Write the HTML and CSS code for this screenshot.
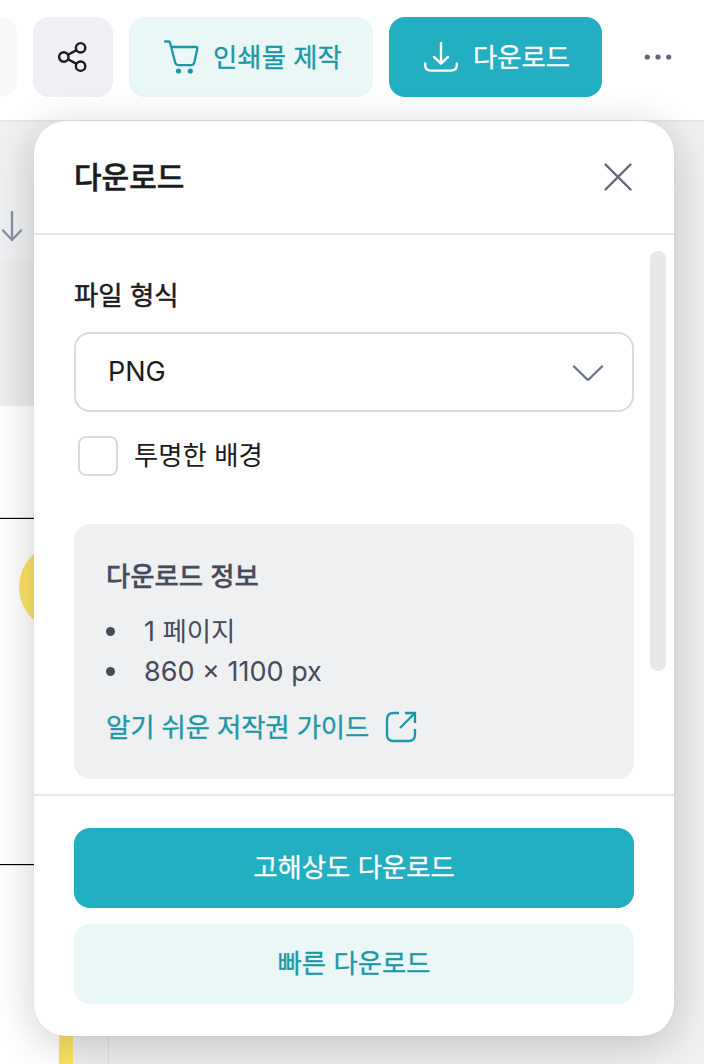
FILE: index.html
```
<!DOCTYPE html>
<html lang="ko">
<head>
  <meta charset="UTF-8" />
  <meta name="viewport" content="width=device-width, initial-scale=1.0"/>
  <title>다운로드</title>
  <link rel="stylesheet" href="styles.css">
</head>
<body>

  <header class="toolbar">
    <div class="tool-edge"></div>
    <button class="tool-btn share-btn" aria-label="공유">
      <svg width="32" height="32" viewBox="0 0 32 32" fill="none" stroke="#1b1b20" stroke-width="2.4">
        <circle cx="6.8" cy="16" r="4.7"/>
        <circle cx="23.6" cy="6.8" r="4.7"/>
        <circle cx="23.6" cy="25.2" r="4.7"/>
        <path d="M11 13.8l8.5-4.7M11 18.2l8.5 4.7"/>
      </svg>
    </button>
    <button class="tool-btn print-btn">
      <svg width="36" height="36" viewBox="0 0 36 36" fill="none" stroke="#1b97a6" stroke-width="2.3" stroke-linecap="round" stroke-linejoin="round">
        <path d="M2 2.500h3.400q1.200 0 1.600 1.300L8.200 8h24.900q1.500 0 1.200 1.500l-2.900 13.800q-.7 2.900-3.400 2.900H15.500q-2.700 0-3.300-2.600L8.200 8"/>
        <circle cx="15.500" cy="32" r="2.600" fill="#1b97a6" stroke="none"/>
        <circle cx="27.300" cy="32" r="2.600" fill="#1b97a6" stroke="none"/>
      </svg>
      <span>인쇄물 제작</span>
    </button>
    <button class="tool-btn download-btn">
      <svg width="36" height="36" viewBox="0 0 36 36" fill="none" stroke="#fff" stroke-width="2.4" stroke-linecap="round" stroke-linejoin="round">
        <path d="M18 4v20M11 18l7 6.500 7-6.500M2.200 24.500v1.500c0 3.600 2 5.600 5.600 5.600h20.400c3.600 0 5.600-2 5.600-5.600v-1.500"/>
      </svg>
      <span>다운로드</span>
    </button>
    <button class="more-btn" aria-label="더보기">
      <svg width="32" height="8" viewBox="0 0 32 8" fill="#62667b">
        <circle cx="5.300" cy="4" r="2.600"/>
        <circle cx="16" cy="4" r="2.600"/>
        <circle cx="26.700" cy="4" r="2.600"/>
      </svg>
    </button>
  </header>

  <main class="workspace">
    <div class="page-tools">
      <svg width="24" height="34" viewBox="0 0 24 34" fill="none" stroke="#8b92a3" stroke-width="2.4" stroke-linecap="round" stroke-linejoin="round">
        <path d="M12 3v28M3 21.500l9 9.500 9-9.500"/>
      </svg>
    </div>
    <div class="prev-page"></div>
    <div class="page">
      <div class="page-row">
        <div class="page-dot"></div>
      </div>
      <div class="page-foot">
        <div class="page-bar"></div>
        <div class="page-margin"></div>
      </div>
    </div>
  </main>

  <section class="dialog">
    <div class="dialog-header">
      <h1>다운로드</h1>
      <button class="close-btn" aria-label="닫기">
        <svg width="32" height="32" viewBox="0 0 32 32" fill="none" stroke="#62667b" stroke-width="2.4" stroke-linecap="round">
          <path d="M3.500 3.500l25 25M28.500 3.500l-25 25"/>
        </svg>
      </button>
    </div>

    <div class="dialog-body">
      <div class="dialog-content">
        <div class="field-label">파일 형식</div>
        <div class="select">
          <span class="latin">PNG</span>
          <svg width="32" height="18" viewBox="0 0 32 18" fill="none" stroke="#6b738d" stroke-width="2.4" stroke-linecap="round" stroke-linejoin="round">
            <path d="M2 2.500l12.800 12.500q1.200 1.100 2.400 0L30 2.500"/>
          </svg>
        </div>
        <div class="check-row">
          <span class="checkbox"></span>
          <span class="check-text">투명한 배경</span>
        </div>
        <div class="info">
          <h2>다운로드 정보</h2>
          <ul>
            <li><span class="latin">1</span><span class="unit"> 페이지</span></li>
            <li><span class="latin">860 × 1100 px</span></li>
          </ul>
          <a class="guide-link">
            <span>알기 쉬운 저작권 가이드</span>
            <svg width="32" height="32" viewBox="0 0 32 32" fill="none" stroke="#1b97a6" stroke-width="2.3">
              <path d="M14 2H8.500Q2 2 2 8.500v15Q2 30 8.500 30h15q6.500 0 6.500-6.500V18"/>
              <path d="M20 2h10v10M30 2L15 17"/>
            </svg>
          </a>
        </div>
      </div>
      <div class="scrollbar"></div>
    </div>

    <div class="dialog-footer">
      <button class="action primary">고해상도 다운로드</button>
      <button class="action secondary">빠른 다운로드</button>
    </div>
  </section>

</body>
</html>
```
FILE: styles.css
```
* {
  box-sizing: border-box;
}

body {
  margin: 0;
  height: 1064px;
  overflow: hidden;
  position: relative;
  display: flex;
  flex-direction: column;
  background-color: #eff0f2;
  color: #1b1b20;
  font-family: Inter, "Noto Sans CJK KR", sans-serif;
  font-size: 26.4px;
}

button {
  padding: 0;
  border: none;
  background: none;
  font: inherit;
  cursor: pointer;
}

svg {
  display: block;
  flex-shrink: 0;
}

.latin {
  font-size: 27px;
}

/* toolbar */
.toolbar {
  display: flex;
  gap: 16px;
  height: 122px;
  padding-top: 17px;
  background-color: #fff;
  border-bottom: 2px solid #e6e6e8;
  flex-shrink: 0;
}

.tool-edge {
  width: 17px;
  height: 80px;
  border-radius: 0 16px 16px 0;
  background-color: #f8f8f8;
}

.tool-btn {
  height: 80px;
  display: flex;
  align-items: center;
  justify-content: center;
  border-radius: 16px;
}

.tool-btn span {
  padding-bottom: 4px;
  -webkit-text-stroke: 0.3px currentColor;
}

.share-btn {
  width: 80px;
  background-color: #eff0f3;
}

.print-btn {
  width: 244px;
  gap: 14px;
  padding-left: 3px;
  background-color: #eaf7f7;
  color: #1b97a6;
}

.download-btn {
  width: 213px;
  gap: 14px;
  padding-left: 2px;
  background-color: #22afc1;
  color: #fff;
}

.more-btn {
  width: 80px;
  height: 80px;
  display: flex;
  align-items: center;
  justify-content: center;
}

/* canvas behind the dialog */
.workspace {
  flex: 1;
  display: flex;
  flex-direction: column;
}

.page-tools {
  height: 139px;
  padding-top: 87px;
}

.prev-page {
  width: 109px;
  height: 145px;
  background-color: #ededed;
}

.page {
  width: 109px;
  flex: 1;
  display: flex;
  flex-direction: column;
  padding-top: 112px;
  background-color: #fff;
  border-right: 1px solid #dfdfe2;
}

.page-row {
  height: 347px;
  padding: 24px 0 0 19px;
  border-top: 1px solid #000;
  border-bottom: 1px solid #000;
  box-shadow: 0 0 1px #000;
}

.page-dot {
  width: 88px;
  height: 88px;
  border-radius: 50%;
  background-color: #fce364;
}

.page-foot {
  flex: 1;
  display: flex;
  padding-left: 59px;
}

.page-bar {
  width: 14px;
  background-color: #fce364;
}

.page-margin {
  flex: 1;
  background-color: #f0f0f0;
}

/* dialog */
.dialog {
  position: absolute;
  top: 121px;
  left: 34px;
  width: 640px;
  height: 915px;
  display: flex;
  flex-direction: column;
  background-color: #fff;
  border-radius: 32px;
  box-shadow: 0 8px 44px rgba(0, 0, 0, 0.2), 0 0 2px rgba(0, 0, 0, 0.06);
}

.dialog-header {
  height: 114px;
  padding: 0 40px;
  display: flex;
  align-items: center;
  justify-content: space-between;
  border-bottom: 2px solid #e6e7e9;
  flex-shrink: 0;
}

.dialog-header h1 {
  margin: 0;
  padding-bottom: 5px;
  font-size: 30px;
  font-weight: 500;
  -webkit-text-stroke: 0.5px currentColor;
}

.dialog-body {
  flex: 1;
  display: flex;
  gap: 16px;
  padding: 16px 8px 15px 40px;
}

.dialog-header {
  height: 114px;
}

.dialog-content {
  width: 560px;
}

.field-label {
  height: 81px;
  padding-top: 24px;
  line-height: 40px;
  -webkit-text-stroke: 0.5px currentColor;
}

.select {
  height: 80px;
  padding: 0 28px 0 32px;
  display: flex;
  align-items: center;
  justify-content: space-between;
  border: 2px solid #dadbe0;
  border-radius: 16px;
}

.select .latin {
  padding-bottom: 2px;
}

.select svg {
  margin-top: 2px;
}

.check-row {
  display: flex;
  align-items: center;
  gap: 16px;
  margin: 24px 0 48px 4px;
  height: 40px;
}

.check-text {
  padding-bottom: 5px;
}

.checkbox {
  width: 40px;
  height: 40px;
  border: 2px solid #dadbe0;
  border-radius: 8px;
}

.info {
  height: 255px;
  padding: 32px;
  border-radius: 16px;
  background-color: #eff0f2;
  color: #464b5c;
}

.info h2 {
  margin: 0 0 15px;
  font-size: 26.4px;
  line-height: 40px;
  font-weight: 500;
  -webkit-text-stroke: 0.3px currentColor;
}

.info ul {
  margin: 0;
  padding: 0;
  list-style: none;
}

.info li {
  display: flex;
  align-items: center;
  height: 40px;
  white-space: pre;
}

.info li::before {
  content: "";
  width: 9px;
  height: 9px;
  margin-right: 29px;
  border-radius: 50%;
  background-color: #464b5c;
}

.unit {
  padding-bottom: 4px;
}

.guide-link {
  display: flex;
  align-items: center;
  gap: 16px;
  height: 40px;
  margin-top: 16px;
  color: #1b97a6;
  letter-spacing: -0.15px;
}

.guide-link span {
  padding-bottom: 4px;
  -webkit-text-stroke: 0.3px currentColor;
}

.scrollbar {
  width: 16px;
  height: 420px;
  border-radius: 8px;
  background-color: #e6e7e9;
}

.dialog-footer {
  height: 242px;
  padding: 32px 40px;
  display: flex;
  flex-direction: column;
  gap: 16px;
  border-top: 2px solid #e6e7e9;
  flex-shrink: 0;
}

.action {
  height: 80px;
  padding-bottom: 5px;
  border-radius: 16px;
  -webkit-text-stroke: 0.3px currentColor;
}

.primary {
  background-color: #22afc1;
  color: #fff;
}

.secondary {
  background-color: #eaf7f7;
  color: #1b97a6;
}
```
